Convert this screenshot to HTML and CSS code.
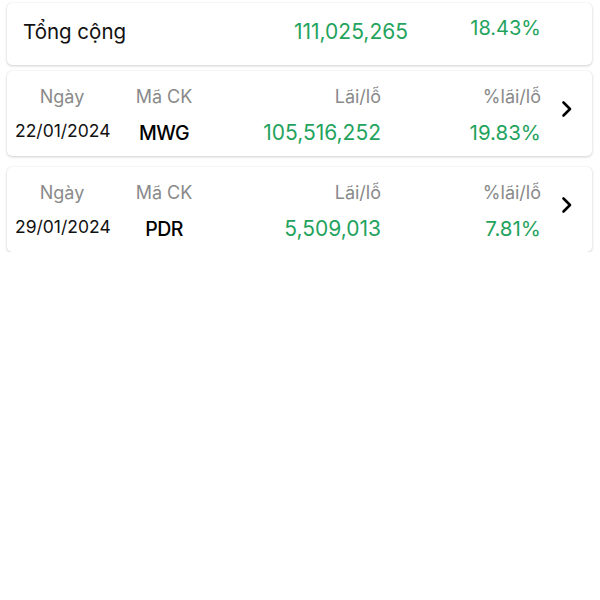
FILE: index.html
```html
<!DOCTYPE html>
<html lang="vi">
<head>
<meta charset="utf-8">
<link rel="stylesheet" href="styles.css">
</head>
<body>
<div class="list">
  <div class="card total">
    <div class="total-label">Tổng cộng</div>
    <div class="total-value green">111,025,265</div>
    <div class="total-pct green">18.43%</div>
  </div>
  <div class="card row">
    <div class="cell c1 head">Ngày</div>
    <div class="cell c2 head">Mã CK</div>
    <div class="cell c3 head">Lãi/lỗ</div>
    <div class="cell c4 head">%lãi/lỗ</div>
    <div class="chev"><svg width="12" height="18" viewBox="0 0 12 18"><path d="M2.5 2.5 L9 9 L2.5 15.5" fill="none" stroke="#000" stroke-width="2.6" stroke-linecap="round" stroke-linejoin="round"/></svg></div>
    <div class="cell c1 date">22/01/2024</div>
    <div class="cell c2 code">MWG</div>
    <div class="cell c3 val green">105,516,252</div>
    <div class="cell c4 pct green">19.83%</div>
  </div>
  <div class="card row">
    <div class="cell c1 head">Ngày</div>
    <div class="cell c2 head">Mã CK</div>
    <div class="cell c3 head">Lãi/lỗ</div>
    <div class="cell c4 head">%lãi/lỗ</div>
    <div class="chev"><svg width="12" height="18" viewBox="0 0 12 18"><path d="M2.5 2.5 L9 9 L2.5 15.5" fill="none" stroke="#000" stroke-width="2.6" stroke-linecap="round" stroke-linejoin="round"/></svg></div>
    <div class="cell c1 date">29/01/2024</div>
    <div class="cell c2 code">PDR</div>
    <div class="cell c3 val green">5,509,013</div>
    <div class="cell c4 pct green">7.81%</div>
  </div>
</div>
</body>
</html>
```
FILE: styles.css
```css
html, body {
  margin: 0;
  padding: 0;
  background: #ffffff;
  font-family: Inter, "Noto Sans", "Liberation Sans", sans-serif;
}
.list {
  display: flex;
  flex-direction: column;
  gap: 6px;
  padding: 3px 8px 0 7px;
}
.card {
  background: #ffffff;
  border-radius: 5px;
  box-shadow: 0 1px 3px rgba(0, 0, 0, 0.18), 0 0 1px rgba(0, 0, 0, 0.12);
}
.row + .row {
  margin-top: 5px;
}
.green {
  color: #1fa35d;
}
.total {
  height: 62px;
  display: grid;
  grid-template-columns: 254px 131px 133px 1fr;
  align-items: center;
  padding-left: 16px;
}
.total-label {
  font-size: 20.5px;
  color: #111;
  padding-bottom: 5px;
}
.total-value {
  font-size: 21px;
  text-align: right;
  padding-bottom: 5px;
}
.total-pct {
  font-size: 20px;
  text-align: right;
  padding-bottom: 12px;
}
.row {
  height: 85px;
  display: grid;
  grid-template-columns: 94px 110px 162px 160px 1fr;
  grid-template-rows: 34px 34px;
  align-content: center;
  padding-left: 8px;
}
.cell {
  white-space: nowrap;
  line-height: 34px;
}
.c1, .c2 { text-align: center; }
.c3, .c4 { text-align: right; }
.head {
  font-size: 18px;
  color: #8a8a8a;
}
.date {
  font-size: 17.5px;
  color: #111;
}
.code {
  font-size: 19.5px;
  color: #000;
  font-weight: 500;
  letter-spacing: -0.6px;
  padding-top: 2px;
}
.val {
  font-size: 21px;
  padding-top: 2px;
}
.pct {
  font-size: 20.5px;
  padding-top: 2px;
}
.chev {
  grid-column: 5;
  grid-row: 1 / span 2;
  display: flex;
  align-items: center;
  padding-left: 20px;
  padding-bottom: 10px;
}
.chev svg { display: block; }
```
